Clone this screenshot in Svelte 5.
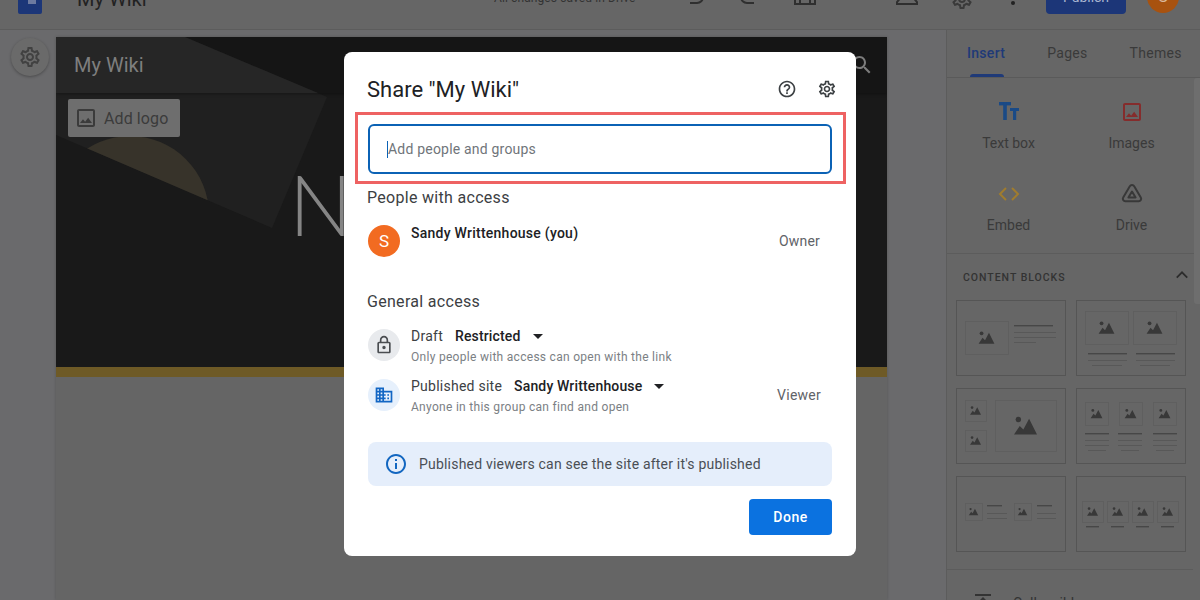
<script>
  const gear = 'M19.43 12.98c.04-.32.07-.64.07-.98 0-.34-.03-.66-.07-.98l2.11-1.65c.19-.15.24-.42.12-.64l-2-3.46c-.09-.16-.26-.25-.44-.25-.06 0-.12.01-.17.03l-2.49 1c-.52-.4-1.08-.73-1.69-.98l-.38-2.65C14.46 2.18 14.25 2 14 2h-4c-.25 0-.46.18-.49.42l-.38 2.65c-.61.25-1.17.59-1.69.98l-2.49-1c-.06-.02-.12-.03-.18-.03-.17 0-.34.09-.43.25l-2 3.46c-.13.22-.07.49.12.64l2.11 1.65c-.04.32-.07.65-.07.98 0 .33.03.66.07.98l-2.11 1.65c-.19.15-.24.42-.12.64l2 3.46c.09.16.26.25.44.25.06 0 .12-.01.17-.03l2.49-1c.52.4 1.08.73 1.69.98l.38 2.65c.03.24.24.42.49.42h4c.25 0 .46-.18.49-.42l.38-2.65c.61-.25 1.17-.59 1.69-.98l2.49 1c.06.02.12.03.18.03.17 0 .34-.09.43-.25l2-3.46c.12-.22.07-.49-.12-.64l-2.11-1.65zm-1.98-1.71c.04.31.05.52.05.73 0 .21-.02.43-.05.73l-.14 1.13.89.7 1.08.84-.7 1.21-1.27-.51-1.04-.42-.9.68c-.43.32-.84.56-1.25.73l-1.06.43-.16 1.13-.2 1.35h-1.4l-.19-1.35-.16-1.13-1.06-.43c-.43-.18-.83-.41-1.23-.71l-.91-.7-1.06.43-1.27.51-.7-1.21 1.08-.84.89-.7-.14-1.13c-.03-.31-.05-.54-.05-.74s.02-.43.05-.73l.14-1.13-.89-.7-1.08-.84.7-1.21 1.27.51 1.04.42.9-.68c.43-.32.84-.56 1.25-.73l1.06-.43.16-1.13.2-1.35h1.39l.19 1.35.16 1.13 1.06.43c.43.18.83.41 1.23.71l.91.7 1.06-.43 1.27-.51.7 1.21-1.07.85-.89.7.14 1.13zM12 8c-2.21 0-4 1.79-4 4s1.79 4 4 4 4-1.79 4-4-1.79-4-4-4zm0 6c-1.1 0-2-.9-2-2s.9-2 2-2 2 .9 2 2-.9 2-2 2z'
  const help = 'M11 18h2v-2h-2v2zm1-16C6.48 2 2 6.48 2 12s4.48 10 10 10 10-4.48 10-10S17.52 2 12 2zm0 18c-4.41 0-8-3.59-8-8s3.59-8 8-8 8 3.59 8 8-3.59 8-8 8zm0-14c-2.21 0-4 1.79-4 4h2c0-1.1.9-2 2-2s2 .9 2 2c0 2-3 1.75-3 5h2c0-2.25 3-2.5 3-5 0-2.21-1.79-4-4-4z'
  const lock = 'M18 8h-1V6c0-2.76-2.24-5-5-5S7 3.24 7 6v2H6c-1.1 0-2 .9-2 2v10c0 1.1.9 2 2 2h12c1.1 0 2-.9 2-2V10c0-1.1-.9-2-2-2zM9 6c0-1.66 1.34-3 3-3s3 1.34 3 3v2H9V6zm9 14H6V10h12v10zm-6-3c1.1 0 2-.9 2-2s-.9-2-2-2-2 .9-2 2 .9 2 2 2z'
  const domain = 'M12 7V3H2v18h20V7H12zM6 19H4v-2h2v2zm0-4H4v-2h2v2zm0-4H4V9h2v2zm0-4H4V5h2v2zm4 12H8v-2h2v2zm0-4H8v-2h2v2zm0-4H8V9h2v2zm0-4H8V5h2v2zm10 12h-8v-2h2v-2h-2v-2h2v-2h-2V9h8v10zm-2-8h-2v2h2v-2zm0 4h-2v2h2v-2z'
  const info = 'M11 7h2v2h-2zm0 4h2v6h-2zm1-9C6.48 2 2 6.48 2 12s4.48 10 10 10 10-4.48 10-10S17.52 2 12 2zm0 18c-4.41 0-8-3.59-8-8s3.59-8 8-8 8 3.59 8 8-3.59 8-8 8z'
  const search = 'M15.5 14h-.79l-.28-.27C15.41 12.59 16 11.11 16 9.5 16 5.91 13.09 3 9.5 3S3 5.91 3 9.5 5.91 16 9.5 16c1.61 0 3.09-.59 4.23-1.57l.27.28v.79l5 4.99L20.49 19l-4.99-5zm-6 0C7.01 14 5 11.99 5 9.5S7.01 5 9.5 5 14 7.01 14 9.5 11.99 14 9.5 14z'
  const image = 'M19 5v14H5V5h14m0-2H5c-1.1 0-2 .9-2 2v14c0 1.1.9 2 2 2h14c1.1 0 2-.9 2-2V5c0-1.1-.9-2-2-2zm-4.86 8.86l-3 3.87L9 13.14 6 17h12l-3.86-5.14z'

  // content block thumbnails: image boxes [x, y, w, h], thick and thin lines [x, y, w]
  const blocks = [
    { imgs: [[9, 21, 43, 33]], thick: [[58, 25, 39]], thin: [[58, 32, 42], [58, 37, 42], [58, 42, 22]] },
    {
      imgs: [[9, 11, 43, 33], [57, 11, 43, 33]],
      thick: [[12, 53, 39], [60, 53, 39]],
      thin: [[12, 60, 39], [16, 65, 30], [60, 60, 39], [64, 65, 30]],
    },
    { imgs: [[9, 12, 21, 21], [9, 42, 21, 21], [39, 12, 61, 51]], thick: [], thin: [] },
    {
      imgs: [[9, 14, 23, 23], [43, 14, 23, 23], [77, 14, 23, 23]],
      thick: [[9, 45, 24], [42, 45, 24], [77, 45, 24]],
      thin: [[9, 52, 24], [9, 57, 24], [12, 62, 18], [42, 52, 24], [42, 57, 24], [45, 62, 18], [77, 52, 24], [77, 57, 24], [80, 62, 18]],
    },
    {
      imgs: [[9, 27, 17, 17], [58, 27, 17, 17]],
      thick: [[31, 29, 15], [81, 29, 15]],
      thin: [[31, 37, 20], [31, 42, 20], [81, 37, 19], [81, 42, 19]],
    },
    {
      imgs: [[6, 25, 21, 21], [31, 25, 21, 21], [56, 25, 21, 21], [81, 25, 21, 21]],
      thick: [[10, 50, 13], [35, 50, 13], [60, 50, 13], [85, 50, 13]],
      thin: [],
    },
  ]

  const tools = [
    { label: 'Text box', kind: 'text' },
    { label: 'Images', kind: 'image' },
    { label: 'Embed', kind: 'embed' },
    { label: 'Drive', kind: 'drive' },
  ]
</script>

<div class="page">
  <header class="topbar">
    <div class="doc-logo"></div>
    <span class="doc-title">My Wiki</span>
    <span class="saved">All changes saved in Drive</span>
    <svg class="tb undo" viewBox="0 0 24 24"><path d="M7 4h7a6 6 0 0 1 0 12H7" /></svg>
    <svg class="tb redo" viewBox="0 0 24 24"><path d="M17 4h-7a6 6 0 0 0 0 12h7" /></svg>
    <svg class="tb preview" viewBox="0 0 24 24"><path d="M2 3h20v16H2zM7 10v9M17 10v9" /></svg>
    <svg class="tb link" viewBox="0 0 24 24"><path d="M3 8h7v8H3zM14 8h7v8h-7z" /></svg>
    <svg class="tb person" viewBox="0 0 24 24"><path d="M2 20v-2l6-7h8l6 7v2z" /></svg>
    <svg class="tb cog" viewBox="0 0 24 24"><path d={gear} class="fill" /></svg>
    <span class="dot"></span>
    <button class="publish">Publish</button>
    <span class="me">S</span>
  </header>

  <div class="workspace">
    <aside class="rail">
      <button class="settings" aria-label="Site settings">
        <svg viewBox="0 0 24 24"><path d={gear} /></svg>
      </button>
    </aside>

    <main class="canvas">
      <section class="hero">
        <svg class="hero-art" viewBox="0 0 831 330">
          <clipPath id="above"><polygon points="0,0 400,0 400,275 216,191 0,98" /></clipPath>
          <polygon points="0,0 129,0 271,60 216,191 0,98" fill="#202020" />
          <polygon points="0,0 129,0 262,56 0,56" fill="#2d2d2d" />
          <circle cx="74" cy="178" r="79" fill="#37332a" clip-path="url(#above)" />
        </svg>
        <div class="site-bar">
          <span class="site-name">My Wiki</span>
          <svg class="site-search" viewBox="0 0 24 24"><path d={search} /></svg>
        </div>
        <button class="add-logo">
          <svg viewBox="0 0 24 24"><path d={image} /></svg>
          Add logo
        </button>
        <h1 class="page-title">N</h1>
      </section>
      <div class="gold"></div>
    </main>

    <aside class="panel">
      <nav class="tabs">
        <span class="tab active">Insert</span>
        <span class="tab">Pages</span>
        <span class="tab">Themes</span>
      </nav>
      <div class="scroll-thumb"></div>
      <div class="tools">
        {#each tools as tool}
          <div class="tool">
            {#if tool.kind === 'text'}
              <svg viewBox="0 0 24 24" fill="#1a4a86">
                <rect x="2" y="2" width="12" height="3.4" /><rect x="6.2" y="2" width="3.6" height="18" />
                <rect x="13" y="8" width="9" height="3" /><rect x="16" y="8" width="3.2" height="12" />
              </svg>
            {:else if tool.kind === 'image'}
              <svg viewBox="0 0 24 24" fill="#852c2c"><path d={image} /></svg>
            {:else if tool.kind === 'embed'}
              <svg viewBox="0 0 24 24" fill="none" stroke="#a07c2e" stroke-width="2"><path d="M9 6l-6 6 6 6M15 6l6 6-6 6" /></svg>
            {:else}
              <svg viewBox="0 0 24 24" fill="none" stroke="#383838" stroke-width="2" stroke-linejoin="round">
                <path d="M9.8 4.2a2.5 2.5 0 0 1 4.4 0l6.6 11.3a2.5 2.5 0 0 1-2.2 3.8H5.4a2.5 2.5 0 0 1-2.2-3.8z" /><path d="M12 9.5l3.6 6H8.4z" />
              </svg>
            {/if}
            <span>{tool.label}</span>
          </div>
        {/each}
      </div>
      <div class="blocks">
        <div class="blocks-head">
          <span>CONTENT BLOCKS</span>
          <svg viewBox="0 0 24 24"><path d="M5 15.5l7-7 7 7" /></svg>
        </div>
        <div class="block-grid">
          {#each blocks as b}
            <svg class="block" viewBox="1 1 108 74">
              {#each b.imgs as [x, y, w, h]}
                {@const s = h * 0.4 + 2.6}
                <rect class="frame" x={x + 0.5} y={y + 0.5} width={w} height={h} />
                <g transform="translate({x + w / 2 - s / 2} {y + h / 2 - s * 0.42}) scale({s / 16})">
                  <circle cx="3" cy="2.5" r="1.9" fill="#383838" />
                  <path d="M0 13l4-6 2.5 2.5L10.5 2 16 13z" fill="#383838" />
                </g>
              {/each}
              {#each b.thick as [x, y, w]}
                <rect x={x} y={y} width={w} height="1.4" fill="#474747" />
              {/each}
              {#each b.thin as [x, y, w]}
                <rect x={x} y={y} width={w} height="0.8" fill="#565656" />
              {/each}
            </svg>
          {/each}
        </div>
        <div class="collapsible">
          <svg viewBox="0 0 16 16"><path d="M0 0h16v2H0zM8 3l4 4H4z" /></svg>
          <span>Collapsible</span>
        </div>
      </div>
    </aside>
  </div>

  <div class="dialog" role="dialog">
    <div class="dialog-head">
      <h2>Share "My Wiki"</h2>
      <svg viewBox="0 0 24 24"><path d={help} /></svg>
      <svg viewBox="0 0 24 24"><path d={gear} /></svg>
    </div>

    <div class="highlight">
      <div class="invite"><span class="caret"></span>Add people and groups</div>
    </div>

    <h3 class="people">People with access</h3>
    <div class="person-row">
      <span class="avatar">S</span>
      <span class="name">Sandy Writtenhouse (you)</span>
      <span class="role">Owner</span>
    </div>

    <h3 class="general">General access</h3>
    <div class="access-row">
      <span class="badge grey"><svg viewBox="0 0 24 24"><path d={lock} /></svg></span>
      <div class="access-text">
        <div class="line"><span>Draft</span><b>Restricted</b><i class="arrow"></i></div>
        <small>Only people with access can open with the link</small>
      </div>
    </div>
    <div class="access-row">
      <span class="badge blue"><svg viewBox="0 0 24 24"><path d={domain} /></svg></span>
      <div class="access-text">
        <div class="line"><span>Published site</span><b>Sandy Writtenhouse</b><i class="arrow"></i></div>
        <small>Anyone in this group can find and open</small>
      </div>
      <span class="role viewer">Viewer</span>
    </div>

    <div class="notice">
      <svg viewBox="0 0 24 24"><path d={info} /></svg>
      <span>Published viewers can see the site after it's published</span>
    </div>

    <div class="actions"><button class="done">Done</button></div>
  </div>
</div>

<style>
  :global(body) {
    background: #666;
    font-family: Roboto, "Liberation Sans", sans-serif;
  }

  .page {
    position: relative;
    width: 1200px;
    height: 600px;
    overflow: hidden;
    background: #6a6a6c;
    color: #3a3a3a;
  }

  button {
    font-family: inherit;
    border: none;
    padding: 0;
  }

  /* top bar, mostly scrolled out of the picture */
  .topbar {
    height: 30px;
    background: #666;
    border-bottom: 1px solid #5c5c5c;
    display: flex;
    align-items: flex-start;
    box-sizing: border-box;
    overflow: hidden;
    position: relative;
  }

  .doc-logo {
    position: relative;
    flex: none;
    width: 24px;
    height: 38px;
    margin: -24px 0 0 18px;
    background: #1c3678;
    border-radius: 2px;
  }

  .doc-logo::after {
    content: "";
    position: absolute;
    right: 6px;
    top: 18px;
    width: 8px;
    height: 10px;
    background: #6d7aa0;
  }

  .doc-title {
    margin: -13px 0 0 35px;
    font-size: 20px;
    line-height: 24px;
    color: #222;
    width: 417px;
    flex: none;
  }

  .saved {
    flex: none;
    width: 189px;
    margin-top: -10px;
    font-size: 12px;
    letter-spacing: 0.1px;
    line-height: 16px;
    color: #333;
  }

  .tb {
    flex: none;
    width: 24px;
    height: 24px;
    fill: none;
    stroke: #2f2f2f;
    stroke-width: 2;
  }

  .tb .fill {
    fill: #3a3a3a;
    stroke: none;
  }

  .undo { margin: -13px 0 0 0; }
  .redo { margin: -13px 0 0 30px; }
  .preview { margin: -15px 0 0 32px; }
  .link { margin: -18px 0 0 27px; fill: #505050; stroke: none; }
  .person { margin: -16px 0 0 27px; }
  .cog { margin: -13px 0 0 31px; }

  .dot {
    flex: none;
    width: 4px;
    height: 4px;
    margin: 1px 0 0 37px;
    border-radius: 50%;
    background: #222;
  }

  .publish {
    flex: none;
    width: 80px;
    height: 30px;
    margin: -16px 0 0 31px;
    padding-bottom: 5px;
    background: #1c3678;
    color: #a8b4d0;
    border-radius: 4px;
    font-size: 14px;
  }

  .me {
    flex: none;
    width: 32px;
    height: 32px;
    margin: -19px 0 0 21px;
    border-radius: 50%;
    background: #a8520f;
    color: #d9b79c;
    font-size: 16px;
    line-height: 32px;
    text-align: center;
  }

  .workspace {
    display: flex;
    height: 570px;
  }

  .rail {
    flex: none;
    width: 56px;
    padding: 8px 0 0 11px;
    box-sizing: border-box;
  }

  .settings {
    display: block;
    width: 38px;
    height: 38px;
    margin-top: 0;
    border-radius: 50%;
    background: #6a6a6a;
    box-shadow: 0 1px 3px rgba(0, 0, 0, 0.3);
  }

  .settings svg {
    display: block;
    width: 24px;
    height: 24px;
    margin: 7px;
    fill: #414141;
  }

  .canvas {
    flex: none;
    width: 831px;
    margin-top: 7px;
    background: #656565;
    box-shadow: 0 0 3px rgba(0, 0, 0, 0.2);
  }

  .hero {
    position: relative;
    height: 330px;
    background: #191919;
    overflow: hidden;
  }

  .hero-art {
    position: absolute;
    inset: 0;
    width: 831px;
    height: 330px;
  }

  .site-bar {
    position: relative;
    height: 56px;
    box-sizing: border-box;
    padding: 0 16px 0 18px;
    display: flex;
    align-items: center;
    justify-content: space-between;
    background: rgba(0, 0, 0, 0.15);
    box-shadow: 0 1px 3px rgba(0, 0, 0, 0.35);
  }

  .site-name {
    font-size: 20px;
    color: #7e7e7e;
  }

  .site-search {
    width: 24px;
    height: 24px;
    fill: #7c7c7c;
    margin-right: -3px;
  }

  .add-logo {
    position: relative;
    display: flex;
    align-items: center;
    gap: 6px;
    width: 112px;
    height: 38px;
    margin: 6px 0 0 12px;
    padding-left: 6px;
    box-sizing: border-box;
    background: #6e6e6e;
    border-radius: 2px;
    color: #3b3b3b;
    font-size: 16px;
    letter-spacing: 0.1px;
  }

  .add-logo svg {
    width: 24px;
    height: 24px;
    fill: #3b3b3b;
  }

  .page-title {
    position: relative;
    margin: 17px 0 0 233px;
    font-family: Lato, sans-serif;
    font-weight: 300;
    font-size: 84px;
    line-height: 100px;
    color: #858585;
  }

  .gold {
    height: 10px;
    background: #6e5a26;
  }

  /* right hand panel */
  .panel {
    position: relative;
    flex: none;
    width: 254px;
    margin-left: 59px;
    border-left: 1px solid #5c5c5c;
    box-sizing: border-box;
    background: #666;
  }

  .scroll-thumb {
    position: absolute;
    right: 0;
    top: 48px;
    width: 6px;
    height: 226px;
    background: #6e6e6e;
    border-radius: 3px 0 0 3px;
  }

  .tabs {
    height: 48px;
    box-sizing: border-box;
    border-bottom: 1px solid #5a5a5a;
    display: flex;
    gap: 42px;
    padding-left: 20px;
  }

  .tab {
    position: relative;
    font-size: 14px;
    letter-spacing: 0.3px;
    line-height: 46px;
    color: #3a3a3a;
  }

  .tab.active {
    color: #1f3a78;
    font-weight: 500;
  }

  .tab.active::after {
    content: "";
    position: absolute;
    left: 3px;
    right: 1px;
    bottom: 0;
    height: 3px;
    border-radius: 3px 3px 0 0;
    background: #1f3a78;
  }

  .tools {
    display: grid;
    grid-template-columns: 123px 123px;
    align-content: start;
    row-gap: 31px;
    height: 176px;
    box-sizing: border-box;
    padding-top: 22px;
    border-bottom: 1px solid #5c5c5c;
  }

  .tool {
    display: flex;
    flex-direction: column;
    align-items: center;
    gap: 11px;
    height: 51px;
    font-size: 14px;
    color: #3a3a3a;
  }

  .tool svg {
    width: 24px;
    height: 24px;
    flex: none;
  }

  .blocks {
    padding: 14px 14px 0 9px;
  }

  .blocks-head {
    display: flex;
    justify-content: space-between;
    align-items: center;
    padding: 0 0 0 7px;
    height: 18px;
    font-size: 10.5px;
    font-weight: 500;
    letter-spacing: 0.98px;
    color: #333;
  }

  .blocks-head svg {
    width: 18px;
    height: 18px;
    margin: -4px -5px 0 0;
    fill: none;
    stroke: #2c2c2c;
    stroke-width: 2.4;
  }

  .block-grid {
    display: grid;
    grid-template-columns: 110px 110px;
    gap: 12px 10px;
    margin: 14px -7px 0 -9px;
    padding: 0 0 17px 9px;
    border-bottom: 1px solid #5c5c5c;
  }

  .block {
    display: block;
    width: 110px;
    height: 76px;
    box-sizing: border-box;
    border: 1px solid #555;
  }

  .frame {
    fill: none;
    stroke: #5e5e5e;
    stroke-width: 0.8;
  }

  .collapsible {
    display: flex;
    align-items: flex-start;
    gap: 22px;
    margin: 24px 0 0 19px;
    font-size: 14px;
    line-height: 16px;
    color: #333;
  }

  .collapsible span {
    margin-top: 1px;
  }

  .collapsible svg {
    width: 16px;
    height: 16px;
    flex: none;
    fill: #333;
  }

  /* share dialog */
  .dialog {
    position: absolute;
    left: 344px;
    top: 52px;
    width: 512px;
    height: 504px;
    box-sizing: border-box;
    padding: 0 24px 0 23px;
    background: #fff;
    border-radius: 8px;
    color: #3c4043;
  }

  .dialog-head {
    display: flex;
    align-items: center;
    gap: 20px;
    height: 60px;
    padding-top: 14px;
    box-sizing: border-box;
    margin-right: -5px;
  }

  .dialog-head h2 {
    flex: 1;
    margin: 0;
    font-size: 22px;
    font-weight: 400;
    color: #202124;
  }

  .dialog-head svg {
    width: 20px;
    height: 20px;
    fill: #3c4043;
  }

  .highlight {
    margin: 0 -14px 0 -12px;
    height: 72px;
    box-sizing: border-box;
    padding: 9px 11px 9px 10px;
    border: 3px solid #ee6262;
  }

  .invite {
    display: flex;
    align-items: center;
    height: 50px;
    box-sizing: border-box;
    padding-left: 17px;
    border: 2px solid #0b62b5;
    border-radius: 6px;
    font-size: 14px;
    letter-spacing: 0.2px;
    color: #70757a;
  }

  .caret {
    width: 1px;
    height: 17px;
    background: #0b62b5;
  }

  h3 {
    margin: 0;
    font-size: 16px;
    font-weight: 400;
    letter-spacing: 0.3px;
    color: #3c4043;
    line-height: 22px;
  }

  .people {
    margin-top: 3px;
  }

  .person-row {
    display: flex;
    margin-top: 16px;
    height: 32px;
  }

  .avatar {
    flex: none;
    width: 32px;
    height: 32px;
    margin-left: 1px;
    border-radius: 50%;
    background: #f26b21;
    color: #fff;
    font-size: 17px;
    line-height: 32px;
    text-align: center;
  }

  .name {
    flex: 1;
    margin-left: 11px;
    font-size: 14px;
    font-weight: 500;
    letter-spacing: 0.25px;
    line-height: 16px;
    color: #202124;
  }

  .role {
    font-size: 14px;
    letter-spacing: 0.2px;
    color: #5f6368;
    line-height: 32px;
    margin-right: 12px;
  }

  .viewer {
    margin-right: 11px;
    letter-spacing: 0.25px;
  }

  .general {
    margin-top: 34px;
  }

  .access-row {
    display: flex;
    margin-top: 16px;
    height: 32px;
  }

  .access-row + .access-row {
    margin-top: 18px;
  }

  .badge {
    flex: none;
    display: flex;
    align-items: center;
    justify-content: center;
    width: 32px;
    height: 32px;
    margin-left: 1px;
    border-radius: 50%;
  }

  .badge svg {
    width: 20px;
    height: 20px;
  }

  .badge.grey {
    background: #e8eaed;
  }

  .badge.grey svg {
    fill: #4a4d51;
  }

  .badge.blue {
    background: #e6f0fc;
  }

  .badge.blue svg {
    fill: #1266c4;
  }

  .access-text {
    flex: 1;
    margin-left: 11px;
    margin-top: -1px;
  }

  .line {
    display: flex;
    align-items: center;
    gap: 12px;
    font-size: 14px;
    letter-spacing: 0.25px;
    line-height: 16px;
    color: #3c4043;
  }

  .line b {
    font-weight: 500;
    letter-spacing: 0.15px;
    color: #202124;
  }

  .arrow {
    width: 0;
    height: 0;
    border: 5px solid transparent;
    border-top-color: #202124;
    border-bottom: none;
  }

  small {
    display: block;
    margin-top: 6px;
    font-size: 12px;
    letter-spacing: 0.29px;
    line-height: 14px;
    color: #7b8084;
  }

  .notice {
    display: flex;
    align-items: center;
    gap: 11px;
    height: 44px;
    margin: 31px 0 0 1px;
    box-sizing: border-box;
    padding-left: 16px;
    background: #e5eefb;
    border-radius: 8px;
    font-size: 14px;
    letter-spacing: 0.2px;
    color: #4a4f55;
  }

  .notice svg {
    width: 24px;
    height: 24px;
    fill: #1266c0;
  }

  .actions {
    display: flex;
    justify-content: flex-end;
    margin-top: 13px;
  }

  .done {
    width: 83px;
    height: 36px;
    background: #0b72e0;
    color: #fff;
    border-radius: 4px;
    font-size: 14px;
    font-weight: 500;
    letter-spacing: 0.5px;
  }
</style>
